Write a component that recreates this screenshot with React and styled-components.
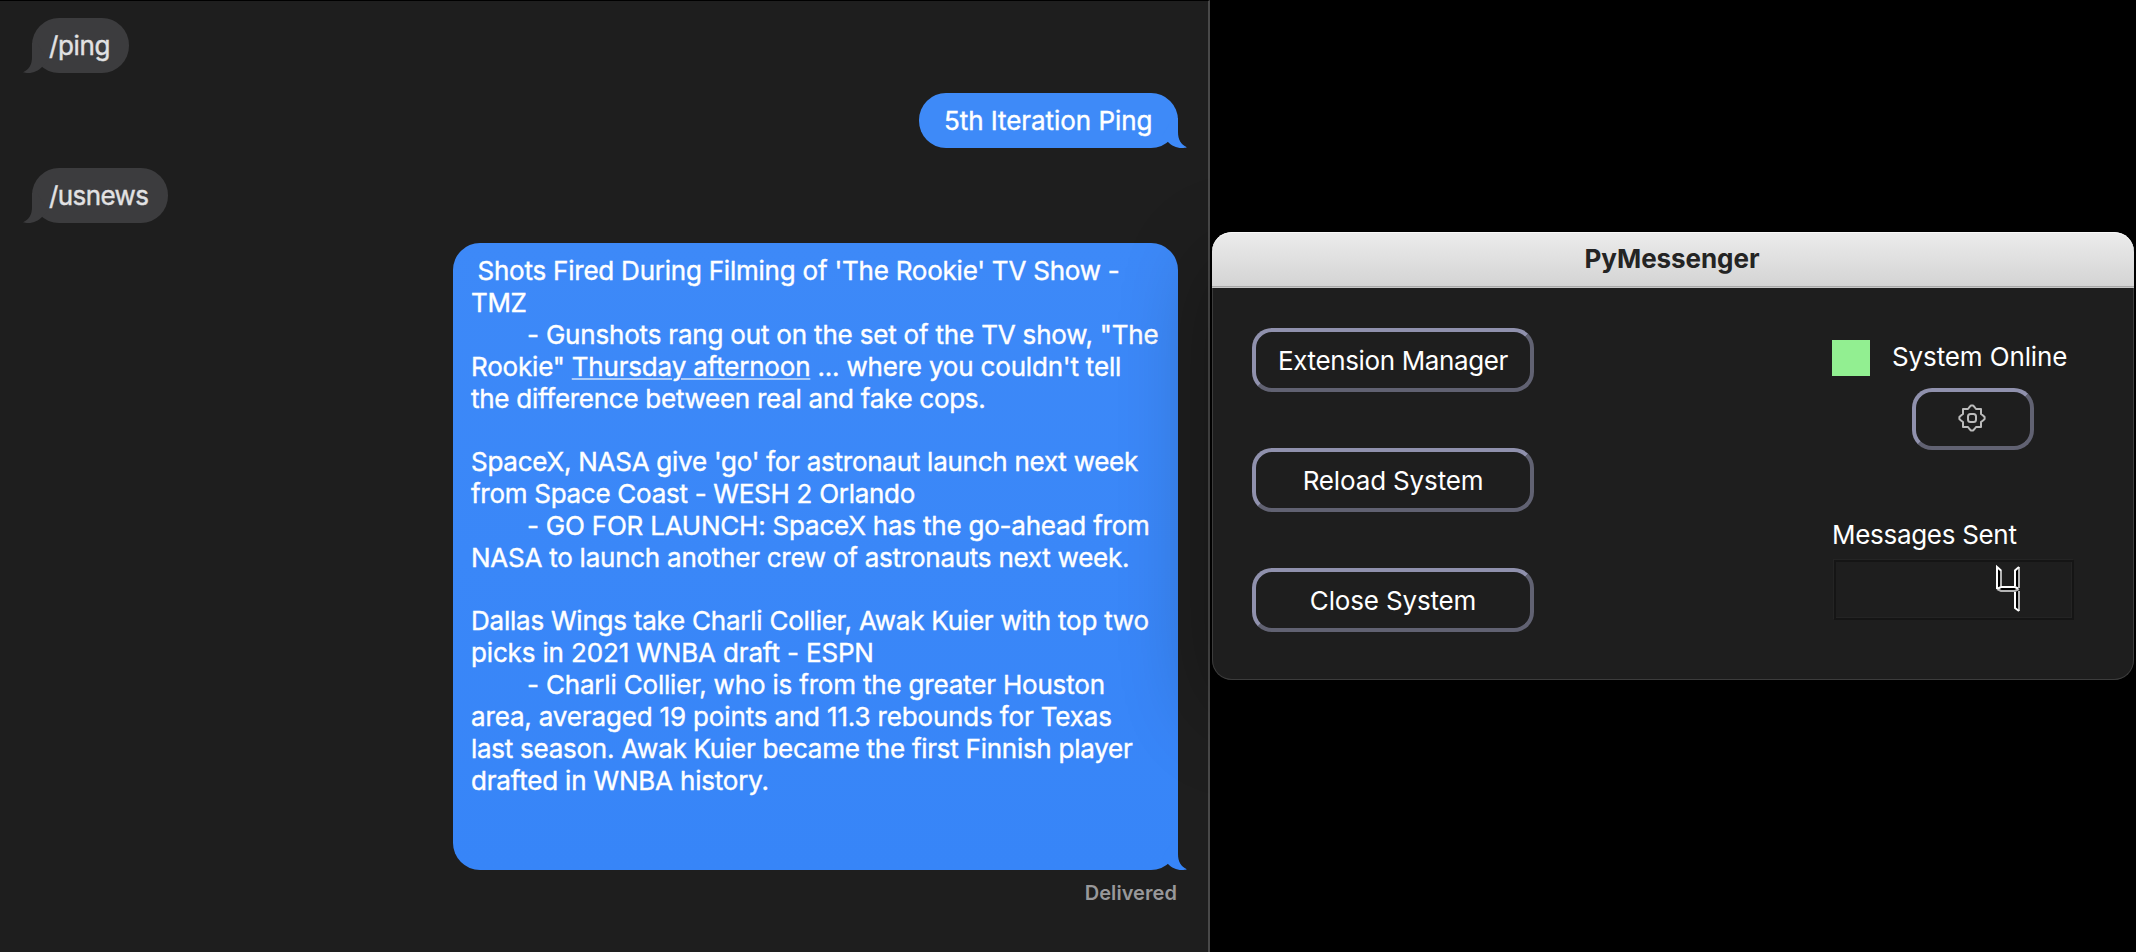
import React from 'react';
import styled, { createGlobalStyle, css } from 'styled-components';

const GlobalStyle = createGlobalStyle`
  * { box-sizing: border-box; }
  body {
    margin: 0;
    background: #000;
    font-family: Inter, "Liberation Sans", sans-serif;
    font-size: 26px;
    line-height: 32px;
    overflow: hidden;
  }
`;

const Desktop = styled.div`
  display: flex;
  align-items: flex-start;
  gap: 2px;
  width: 2136px;
  height: 952px;
  background: #000;
  overflow: hidden;
`;

/* ---------- Chat ---------- */

const Chat = styled.main`
  flex: none;
  display: flex;
  flex-direction: column;
  gap: 20px;
  width: 1210px;
  height: 952px;
  padding: 17px 30px 0 32px;
  background: #1e1e1e;
  border-top: 1px solid #000;
  border-right: 2px solid #484848;
`;

const Bubble = styled.article`
  position: relative;
  flex: none;
  align-self: ${(p) => (p.$sent ? 'flex-end' : 'flex-start')};
  width: ${(p) => p.$width}px;
  padding: 12px 0 11px 18px;
  border-radius: 27px;
  color: ${(p) => (p.$sent ? '#fff' : '#e2e2e3')};
  background: ${(p) => (p.$sent ? `linear-gradient(${p.$from}, ${p.$to})` : '#3c3c3e')};
  white-space: pre;
  -webkit-text-stroke: 0.4px currentColor;
`;

const TailShape = styled.svg`
  position: absolute;
  bottom: 0;
  width: 30px;
  height: 30px;
  fill: ${(p) => p.$color};
  ${(p) =>
    p.$sent
      ? css`right: -10px;`
      : css`
          left: -10px;
          transform: scaleX(-1);
        `}
`;

const Line = styled.div`
  height: ${(p) => (p.$blank ? 31 : 32)}px;
  margin-left: ${(p) => p.$indent || 0}px;
  letter-spacing: ${(p) => p.$tracking || 0}px;
`;

const DateLink = styled.span`
  text-decoration: underline;
  text-decoration-color: #a9cbfb;
  text-decoration-thickness: 2px;
  text-underline-offset: 2px;
`;

const Receipt = styled.div`
  align-self: flex-end;
  margin-top: -12px;
  margin-right: 1px;
  font-size: 20px;
  font-weight: 600;
  line-height: 30px;
  letter-spacing: 0.06px;
  color: #98989a;
`;

/* ---------- PyMessenger window ---------- */

const Window = styled.section`
  position: relative;
  flex: none;
  width: 922px;
  height: 448px;
  margin-top: 232px;
  border-radius: 21px;
  background: #1e1e1e;
  box-shadow: 0 30px 90px rgba(0, 0, 0, 0.32);
  color: #fff;
  overflow: visible;
`;

const TitleBar = styled.header`
  display: flex;
  justify-content: center;
  height: 56px;
  padding: 11px 2px 0 0;
  border-radius: 20px 20px 0 0;
  background: linear-gradient(#ececec, #d3d3d3);
  box-shadow: inset 0 1px #f8f8f8, inset 0 -1px #c6c6c6, inset 0 -2px #a9a9a9;
  color: #242424;
  font-weight: 700;
  letter-spacing: -0.07px;
`;

const Body = styled.div`
  display: flex;
  justify-content: space-between;
  height: 392px;
  padding: 40px 59px 0 39px;
  border: 1px solid #3c3c3c;
  border-top: 0;
  border-radius: 0 0 20px 20px;
`;

const Actions = styled.div`
  display: flex;
  flex-direction: column;
  gap: 56px;
`;

const Button = styled.button`
  display: flex;
  align-items: center;
  justify-content: center;
  width: ${(p) => p.$width}px;
  height: ${(p) => p.$height}px;
  padding: ${(p) => (p.$icon ? '0 2px 2px 0' : '1px 0 0')};
  border: 4px solid;
  border-color: #9091ad #616272 #616272 #9091ad;
  border-radius: 20px;
  background: transparent;
  color: #fff;
  font: inherit;
  letter-spacing: ${(p) => p.$tracking || 0}px;
`;

const Status = styled.div`
  display: flex;
  flex-direction: column;
  align-items: flex-start;
  width: 242px;
  padding-top: 12px;
`;

const StatusRow = styled.div`
  display: flex;
  gap: 22px;
  height: 36px;
  margin-bottom: 12px;
  line-height: 34px;
  letter-spacing: -0.12px;
`;

const Lamp = styled.span`
  width: 38px;
  height: 36px;
  background: #92ef91;
`;

const SettingsSlot = styled.div`
  margin-left: 80px;
`;

const Counter = styled.div`
  margin-top: 69px;
  letter-spacing: -0.3px;
`;

const Lcd = styled.div`
  display: flex;
  justify-content: flex-end;
  width: 240px;
  height: 60px;
  margin: 9px 0 0 2px;
  padding: 2px 50px 0 0;
  border: 2px solid #151515;
  box-shadow: -1px -1px #242424, inset -1px -1px #242424;
`;

function Tail({ sent, color }) {
  return (
    <TailShape $sent={sent} $color={color} viewBox="0 0 30 30" aria-hidden="true">
      <path d="M15 0 H20 V14 C20 21.5 23 26.5 28.8 29.2 C27.5 29.8 26 30 24 30 C18 30 13.5 27.5 10 24 L4 18 Z" />
    </TailShape>
  );
}

function GearIcon() {
  return (
    <svg width="30" height="30" viewBox="-15 -15 30 30" fill="none" stroke="#bcbcbc" strokeWidth="2" strokeLinejoin="round">
      <path d="M-4 -9 L-2.5 -11 L-1 -12.6 H1 L2.5 -11 L4 -9 H9 V-4 L11 -2.5 L12.6 -1 V1 L11 2.5 L9 4 V9 H4 L2.5 11 L1 12.6 H-1 L-2.5 11 L-4 9 H-9 V4 L-11 2.5 L-12.6 1 V-1 L-11 -2.5 L-9 -4 V-9 Z" />
      <rect x="-4" y="-4" width="8" height="8" rx="2.5" />
    </svg>
  );
}

function LcdFour() {
  return (
    <svg width="28" height="50" viewBox="0 0 28 50" fill="none" strokeWidth="2" role="img" aria-label="4">
      <path fill="#000" d="M3 3 L7 6.5 V23 H21 V6.5 L25 3 V47 L21 44 V27 H7 L3 25 Z" />
      <path stroke="#b4b4b4" d="M7 6 V22 M25 3 V24 M3 25 L7 27 H21 L25 25 M25 27 V47" />
      <path stroke="#fff" d="M3 25 V3 L7 6.5 M21 22 V6.5 L25 3 M4 24.5 L7 23 H21 L24 24.5 M21 28 V44 L25 47" />
    </svg>
  );
}

const NEWS = [
  { text: "Shots Fired During Filming of 'The Rookie' TV Show -", indent: 6.5, tracking: -0.228 },
  { text: 'TMZ', tracking: -0.385 },
  { text: '- Gunshots rang out on the set of the TV show, "The', indent: 56, tracking: -0.19 },
  { text: 'Rookie" ', link: 'Thursday afternoon', rest: " ... where you couldn't tell", tracking: -0.19 },
  { text: 'the difference between real and fake cops.', tracking: -0.27 },
  { text: '' },
  { text: "SpaceX, NASA give 'go' for astronaut launch next week", tracking: -0.259 },
  { text: 'from Space Coast - WESH 2 Orlando', tracking: -0.28 },
  { text: '- GO FOR LAUNCH: SpaceX has the go-ahead from', indent: 56, tracking: -0.22 },
  { text: 'NASA to launch another crew of astronauts next week.', tracking: -0.25 },
  { text: '' },
  { text: 'Dallas Wings take Charli Collier, Awak Kuier with top two', tracking: -0.236 },
  { text: 'picks in 2021 WNBA draft - ESPN', tracking: -0.15 },
  { text: '- Charli Collier, who is from the greater Houston', indent: 56, tracking: -0.185 },
  { text: 'area, averaged 19 points and 11.3 rebounds for Texas', tracking: -0.16 },
  { text: 'last season. Awak Kuier became the first Finnish player', tracking: -0.265 },
  { text: 'drafted in WNBA history.', tracking: -0.197 },
  { text: '' },
  { text: '' },
];

const MESSAGES = [
  { width: 97, lines: [{ text: '/ping', indent: -1, tracking: -0.35 }] },
  { sent: true, width: 259, from: '#3e8af8', to: '#3e8af8', lines: [{ text: '5th Iteration Ping', indent: 7, tracking: -0.06 }] },
  { width: 136, lines: [{ text: '/usnews', indent: -1, tracking: -0.6 }] },
  { sent: true, width: 725, from: '#3d89f8', to: '#3785f8', lines: NEWS },
];

const ACTIONS = [
  { label: 'Extension Manager', tracking: -0.371 },
  { label: 'Reload System', tracking: -0.15 },
  { label: 'Close System', tracking: -0.16 },
];

export default function App() {
  return (
    <>
      <GlobalStyle />
      <Desktop>
        <Chat>
          {MESSAGES.map((m, i) => (
            <Bubble key={i} $sent={m.sent} $width={m.width} $from={m.from} $to={m.to}>
              <Tail sent={m.sent} color={m.sent ? m.to : '#3c3c3e'} />
              {m.lines.map((l, j) => (
                <Line key={j} $indent={l.indent} $tracking={l.tracking} $blank={!l.text}>
                  {l.text}
                  {l.link && <DateLink>{l.link}</DateLink>}
                  {l.rest}
                </Line>
              ))}
            </Bubble>
          ))}
          <Receipt>Delivered</Receipt>
        </Chat>
        <Window>
          <TitleBar>PyMessenger</TitleBar>
          <Body>
            <Actions>
              {ACTIONS.map((a) => (
                <Button key={a.label} $width={282} $height={64} $tracking={a.tracking}>
                  {a.label}
                </Button>
              ))}
            </Actions>
            <Status>
              <StatusRow>
                <Lamp />
                System Online
              </StatusRow>
              <SettingsSlot>
                <Button $icon $width={122} $height={62} aria-label="Settings">
                  <GearIcon />
                </Button>
              </SettingsSlot>
              <Counter>Messages Sent</Counter>
              <Lcd>
                <LcdFour />
              </Lcd>
            </Status>
          </Body>
        </Window>
      </Desktop>
    </>
  );
}
